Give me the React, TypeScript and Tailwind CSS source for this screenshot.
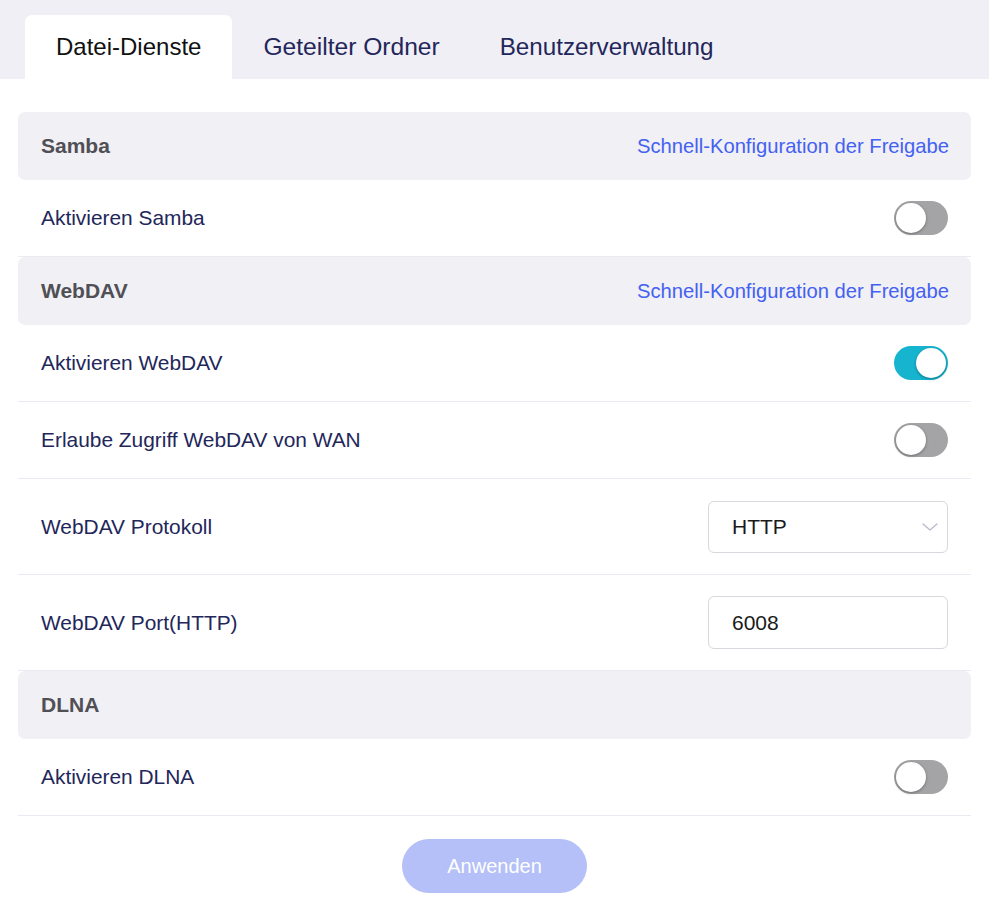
import React from "react";

function Toggle({ on }: { on: boolean }) {
  return (
    <div
      className={
        "relative h-[34px] w-[54px] rounded-full " +
        (on ? "bg-[#17b4cf]" : "bg-[#a4a4a6]")
      }
    >
      <div
        className={
          "absolute top-[2px] h-[30px] w-[30px] rounded-full bg-white shadow-[0_1px_3px_rgba(0,0,0,0.35)] " +
          (on ? "left-[22px]" : "left-[2px]")
        }
      />
    </div>
  );
}

function Header({ title, link }: { title: string; link?: string }) {
  return (
    <div className="flex h-[68px] items-center justify-between rounded-[7px] bg-[#f1f0f5] px-[22px]">
      <span className="pl-px text-[21px] font-bold text-[#4f4f55]">{title}</span>
      {link && <span className="text-[20.2px] text-[#4361f2]">{link}</span>}
    </div>
  );
}

function Row({
  label,
  children,
  tall,
}: {
  label: string;
  children: React.ReactNode;
  tall?: boolean;
}) {
  return (
    <div
      className={
        "flex items-center justify-between border-b border-[#ebeaf2] px-[23px] " +
        (tall ? "h-[96px]" : "h-[77px]")
      }
    >
      <span className="text-[20.9px] text-[#23265a]">{label}</span>
      {children}
    </div>
  );
}

export default function App() {
  return (
    <div
      className="min-h-[907px] w-full bg-white"
      style={{ fontFamily: '"Liberation Sans", Arial, sans-serif' }}
    >
      <div className="flex h-[79px] items-end bg-[#f0eff5] pl-[25px]">
        <div className="flex h-[64px] items-center rounded-t-[7px] bg-white px-[31px] text-[24px] text-[#111111]">
          Datei-Dienste
        </div>
        <div className="flex h-[64px] items-center px-[31px] text-[24.6px] text-[#23265a]">
          Geteilter Ordner
        </div>
        <div className="flex h-[64px] items-center px-[29px] text-[24.2px] text-[#23265a]">
          Benutzerverwaltung
        </div>
      </div>

      <div className="px-[18px] pt-[33px]">
        <Header title="Samba" link="Schnell-Konfiguration der Freigabe" />
        <Row label="Aktivieren Samba">
          <Toggle on={false} />
        </Row>
        <Header title="WebDAV" link="Schnell-Konfiguration der Freigabe" />
        <Row label="Aktivieren WebDAV">
          <Toggle on={true} />
        </Row>
        <Row label="Erlaube Zugriff WebDAV von WAN">
          <Toggle on={false} />
        </Row>
        <Row label="WebDAV Protokoll" tall>
          <div className="flex h-[52px] w-[240px] items-center justify-between rounded-[6px] border border-[#d8d8de] bg-white pl-[23px] pr-[8px]">
            <span className="text-[21px] text-[#1a1a1a]">HTTP</span>
            <svg width="18" height="10" viewBox="0 0 18 10" fill="none">
              <path
                d="M2 2 L9 8 L16 2"
                stroke="#b9bcc8"
                strokeWidth="1.4"
                strokeLinecap="round"
                strokeLinejoin="round"
              />
            </svg>
          </div>
        </Row>
        <Row label="WebDAV Port(HTTP)" tall>
          <div className="flex h-[53px] w-[240px] items-center rounded-[6px] border border-[#d8d8de] bg-white pl-[23px]">
            <span className="text-[21px] text-[#1a1a1a]">6008</span>
          </div>
        </Row>
        <Header title="DLNA" />
        <Row label="Aktivieren DLNA">
          <Toggle on={false} />
        </Row>
        <div className="flex justify-center pt-[23px]">
          <button className="h-[54px] w-[185px] rounded-full bg-[#b4c0f7] text-[20px] text-white">
            Anwenden
          </button>
        </div>
      </div>
    </div>
  );
}
